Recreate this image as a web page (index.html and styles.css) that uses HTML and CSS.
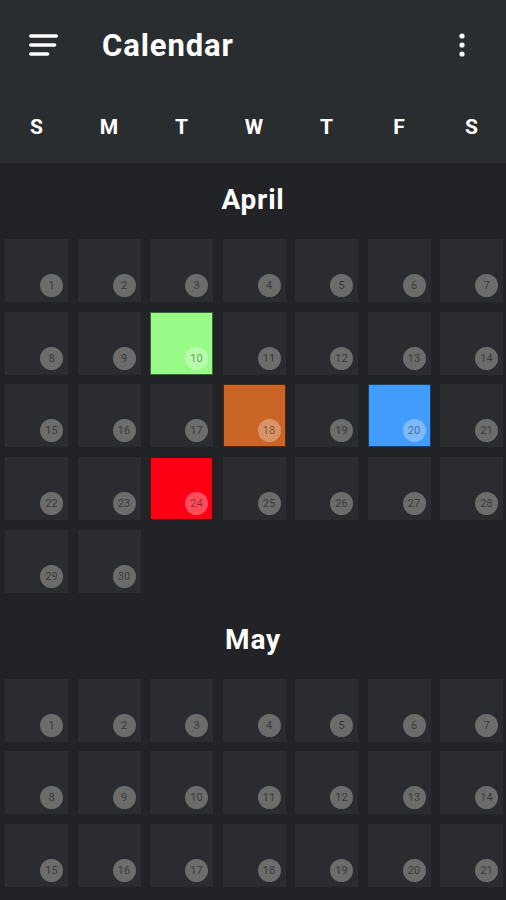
FILE: index.html
```html
<!DOCTYPE html>
<html lang="en">
<head>
    <meta charset="UTF-8">
    <meta name="viewport" content="width=device-width, initial-scale=1.0">
    <title>Calendar</title>
    <link rel="stylesheet" href="styles.css">
</head>
<body>
    <div class="header">
        <div class="topbar">
            <svg class="menu-icon" width="30" height="24" viewBox="0 0 30 24">
                <line x1="1.8" y1="3" x2="27.2" y2="3" />
                <line x1="1.8" y1="12" x2="25.5" y2="12" />
                <line x1="1.8" y1="21" x2="18.5" y2="21" />
            </svg>
            <div class="title">Calendar</div>
            <svg class="more-icon" width="8" height="26" viewBox="0 0 8 26">
                <circle cx="4" cy="4" r="2.6" />
                <circle cx="4" cy="13" r="2.6" />
                <circle cx="4" cy="22" r="2.6" />
            </svg>
        </div>
        <div class="weekdays">
            <div>S</div><div>M</div><div>T</div><div>W</div><div>T</div><div>F</div><div>S</div>
        </div>
    </div>

    <div id="months"></div>

    <script>
        // dias marcados: mes -> { dia: clase }
        var marked = {
            April: { 10: 'green', 18: 'orange', 20: 'blue', 24: 'red' },
            May: {}
        };
        var months = [
            { name: 'April', days: 30 },
            { name: 'May', days: 21 }
        ];

        var container = document.getElementById('months');
        months.forEach(function (m) {
            var section = document.createElement('div');
            section.className = 'month';
            section.innerHTML = '<div class="month-title">' + m.name + '</div>';
            var grid = document.createElement('div');
            grid.className = 'days';
            for (var d = 1; d <= m.days; d++) {
                var cell = document.createElement('div');
                var color = marked[m.name][d];
                cell.className = 'day' + (color ? ' marked ' + color : '');
                cell.innerHTML = '<span class="num">' + d + '</span>';
                grid.appendChild(cell);
            }
            section.appendChild(grid);
            container.appendChild(section);
        });
    </script>
</body>
</html>
```

FILE: styles.css
```css
body {
    margin: 0;
    background: #212326;
    font-family: Roboto, 'Noto Sans', sans-serif;
    color: #fff;
    overflow: hidden;
}
.header {
    background: #2a2d30;
    height: 163px;
}
.topbar {
    height: 90px;
    display: flex;
    align-items: center;
    padding-left: 29px;
    padding-right: 40px;
}
.menu-icon line {
    stroke: #fff;
    stroke-width: 3.6;
    stroke-linecap: round;
}
.more-icon {
    margin-left: auto;
}
.more-icon circle {
    fill: #fff;
}
.title {
    margin-left: 43px;
    font-size: 31px;
    font-weight: 700;
    letter-spacing: 0.9px;
}
.weekdays {
    display: grid;
    grid-template-columns: repeat(7, 63px);
    column-gap: 9.5px;
    padding-left: 5px;
    height: 73px;
    align-items: center;
    text-align: center;
    font-size: 21px;
    font-weight: 700;
}
.month {
    padding-top: 17px;
    padding-bottom: 10px;
}
.month-title {
    height: 40px;
    line-height: 40px;
    text-align: center;
    font-size: 28px;
    font-weight: 700;
    letter-spacing: 0.8px;
    margin-bottom: 19px;
}
.days {
    display: grid;
    grid-template-columns: repeat(7, 63px);
    column-gap: 9.5px;
    row-gap: 9.7px;
    padding-left: 5px;
}
.day {
    height: 63px;
    background: #2a2c2f;
    display: flex;
    align-items: flex-end;
    justify-content: flex-end;
    padding: 5px;
    box-sizing: border-box;
}
.num {
    width: 23px;
    height: 23px;
    border-radius: 50%;
    background: #6c6c6c;
    color: #3a3a3a;
    font-size: 11px;
    line-height: 23px;
    text-align: center;
}
.marked {
    box-shadow: inset 0 0 0 1px rgba(0, 0, 0, 0.6);
}
.marked .num {
    background: rgba(255, 255, 255, 0.3);
    color: rgba(0, 0, 0, 0.45);
}
.green { background: #98fb88; }
.orange { background: #cb6427; }
.blue { background: #429cfb; }
.red { background: #fe0014; }
```
